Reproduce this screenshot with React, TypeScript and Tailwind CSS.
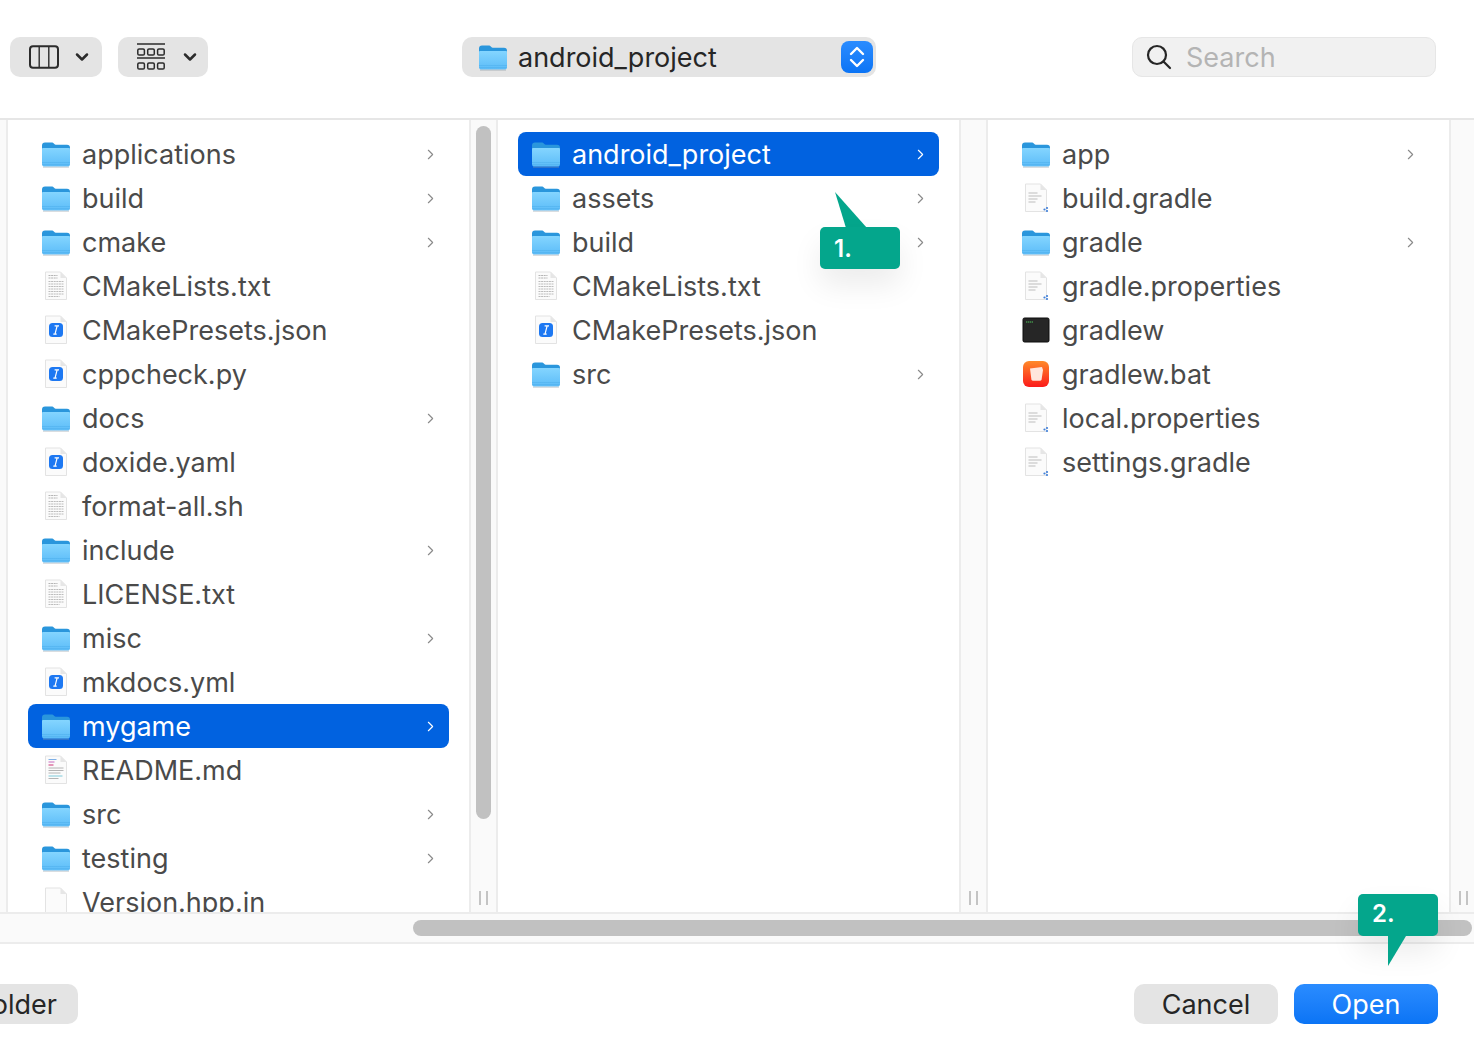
import { ChevronDown, ChevronRight } from "lucide-react";

type Kind = "folder" | "text" | "script" | "gradle" | "terminal" | "bat" | "blank" | "readme";

type Entry = { name: string; kind: Kind; selected?: boolean };

const column1: Entry[] = [
  { name: "applications", kind: "folder" },
  { name: "build", kind: "folder" },
  { name: "cmake", kind: "folder" },
  { name: "CMakeLists.txt", kind: "text" },
  { name: "CMakePresets.json", kind: "script" },
  { name: "cppcheck.py", kind: "script" },
  { name: "docs", kind: "folder" },
  { name: "doxide.yaml", kind: "script" },
  { name: "format-all.sh", kind: "text" },
  { name: "include", kind: "folder" },
  { name: "LICENSE.txt", kind: "text" },
  { name: "misc", kind: "folder" },
  { name: "mkdocs.yml", kind: "script" },
  { name: "mygame", kind: "folder", selected: true },
  { name: "README.md", kind: "readme" },
  { name: "src", kind: "folder" },
  { name: "testing", kind: "folder" },
  { name: "Version.hpp.in", kind: "blank" },
];

const column2: Entry[] = [
  { name: "android_project", kind: "folder", selected: true },
  { name: "assets", kind: "folder" },
  { name: "build", kind: "folder" },
  { name: "CMakeLists.txt", kind: "text" },
  { name: "CMakePresets.json", kind: "script" },
  { name: "src", kind: "folder" },
];

const column3: Entry[] = [
  { name: "app", kind: "folder" },
  { name: "build.gradle", kind: "gradle" },
  { name: "gradle", kind: "folder" },
  { name: "gradle.properties", kind: "gradle" },
  { name: "gradlew", kind: "terminal" },
  { name: "gradlew.bat", kind: "bat" },
  { name: "local.properties", kind: "gradle" },
  { name: "settings.gradle", kind: "gradle" },
];

function FolderIcon() {
  return (
    <svg width="30" height="28" viewBox="0 0 30 28" className="shrink-0">
      <defs>
        <linearGradient id="folderFront" x1="0" y1="0" x2="0" y2="1">
          <stop offset="0" stopColor="#84d5ff" />
          <stop offset="1" stopColor="#5cbcf8" />
        </linearGradient>
      </defs>
      <path d="M1 5.5C1 3.5 2 2.5 4 2.5h6.5c1.2 0 1.8.4 2.6 1.2.7.7 1.2 1 2.2 1H26c2 0 3 1 3 3v4H1z" fill="#2a96dc" />
      <path d="M1 9.2c0-.7.5-1.2 1.2-1.2h25.6c.7 0 1.2.5 1.2 1.2V24c0 1.7-1 2.6-2.6 2.6H3.6C2 26.6 1 25.7 1 24z" fill="url(#folderFront)" />
      <path d="M1 22.5h28M1 24.6h28" stroke="#45a9e8" strokeWidth="0.7" opacity="0.55" />
      <path d="M2 27.2h26" stroke="#8f9aa3" strokeWidth="0.8" opacity="0.6" />
    </svg>
  );
}

function DocShape({ children }: { children?: React.ReactNode }) {
  return (
    <svg width="30" height="30" viewBox="0 0 30 30" className="shrink-0">
      <path d="M4.5 1h15l6 6v21.5H4.5z" fill="#fbfbfb" stroke="#e3e3e3" strokeWidth="1" />
      <path d="M19.5 1v6h6z" fill="#e6e6e6" />
      {children}
    </svg>
  );
}

function FileIcon({ kind }: { kind: Kind }) {
  if (kind === "folder") return <FolderIcon />;
  if (kind === "blank") return <DocShape />;
  if (kind === "text") {
    return (
      <DocShape>
        <path d="M7.5 4.5h9M7.5 7h9" stroke="#b4b4b4" strokeWidth="1" strokeDasharray="2 0.6" />
        <path d="M7.5 10.5h15M7.5 13h15M7.5 15.5h15M7.5 18h15M7.5 20.5h15M7.5 23h15M7.5 25.5h11" stroke="#bcbcbc" strokeWidth="1" strokeDasharray="2 0.6" />
      </DocShape>
    );
  }
  if (kind === "readme") {
    return (
      <DocShape>
        <path d="M7.5 4.5h8" stroke="#7fb0e6" strokeWidth="1" />
        <path d="M7.5 7h6" stroke="#c86ac0" strokeWidth="1" />
        <path d="M7.5 10h5" stroke="#d8548c" strokeWidth="1.2" />
        <path d="M7.5 13h15M7.5 15.5h15M7.5 18h12" stroke="#b4b4b4" strokeWidth="1" />
        <path d="M7.5 21h14" stroke="#7fc9d8" strokeWidth="1" />
        <path d="M7.5 23.5h10" stroke="#b4b4b4" strokeWidth="1" />
      </DocShape>
    );
  }
  if (kind === "gradle") {
    return (
      <DocShape>
        <path d="M7.5 10h9M7.5 13h13M7.5 16h9M7.5 19h7" stroke="#bdbdbd" strokeWidth="1.2" />
        <circle cx="23.5" cy="26.5" r="1.1" fill="#3f7fd8" />
        <circle cx="26" cy="25" r="1.1" fill="#3f7fd8" />
        <circle cx="26" cy="28" r="1.1" fill="#3f7fd8" />
      </DocShape>
    );
  }
  if (kind === "script") {
    return (
      <svg width="30" height="30" viewBox="0 0 30 30" className="shrink-0">
        <path d="M4.5 1h15l6 6v21.5H4.5z" fill="#fbfbfb" stroke="#e3e3e3" strokeWidth="1" />
        <path d="M19.5 1v6h6z" fill="#e6e6e6" />
        <rect x="8" y="8" width="14" height="14" rx="3.5" fill="#1d78f2" />
        <path d="M16.2 10.6l-2.2 8.6M13.6 10.8h4.4M12.3 19.2h3.4" stroke="#fff" strokeWidth="1.2" />
      </svg>
    );
  }
  if (kind === "terminal") {
    return (
      <svg width="30" height="30" viewBox="0 0 30 30" className="shrink-0">
        <rect x="2" y="3" width="26" height="24" rx="1.5" fill="#262626" stroke="#0c0c0c" strokeWidth="1" />
        <path d="M5 7h7" stroke="#4fc45a" strokeWidth="1.2" strokeDasharray="1.4 0.6" />
      </svg>
    );
  }
  return (
    <svg width="30" height="30" viewBox="0 0 30 30" className="shrink-0">
      <defs>
        <linearGradient id="batBg" x1="0" y1="0" x2="0" y2="1">
          <stop offset="0" stopColor="#ff8a2a" />
          <stop offset="1" stopColor="#fb1a1a" />
        </linearGradient>
      </defs>
      <rect x="2" y="2" width="26" height="26" rx="6" fill="url(#batBg)" />
      <path d="M9 9.5l12-1.5 1 3-1.4 9.6c-.1.7-.6 1.2-1.4 1.2h-7.4c-.8 0-1.3-.5-1.4-1.2z" fill="#ffe6dc" />
    </svg>
  );
}

function Row({ entry }: { entry: Entry }) {
  const { name, kind, selected } = entry;
  return (
    <div
      className={`flex h-11 shrink-0 items-center rounded-lg pl-[13px] pr-[10px] ${selected ? "bg-[#0162e0] text-white" : "text-[#4a4a4a]"}`}
    >
      <FileIcon kind={kind} />
      <span className="ml-[11px] flex-1 whitespace-nowrap text-[27px] leading-none">{name}</span>
      {kind === "folder" && (
        <ChevronRight size={17} strokeWidth={1.6} className={selected ? "text-white" : "text-[#8a8a8a]"} />
      )}
    </div>
  );
}

function Column({ entries, thumb }: { entries: Entry[]; thumb?: boolean }) {
  return (
    <div className="flex min-h-0">
      <div className="flex h-full w-[461px] flex-col overflow-hidden bg-white px-5 pt-3">
        {entries.map((entry) => (
          <Row key={entry.name} entry={entry} />
        ))}
      </div>
      <div className="relative h-full w-[29px] border-x-2 border-[#ececec] bg-[#fafafa]">
        {thumb && <div className="mx-auto mt-[6px] h-[693px] w-[15px] rounded-full bg-[#c1c1c1]" />}
        <div className="absolute bottom-[7px] left-[8px] flex gap-[5px]">
          <div className="h-[14px] w-[2px] bg-[#c4c4c4]" />
          <div className="h-[14px] w-[2px] bg-[#c4c4c4]" />
        </div>
      </div>
    </div>
  );
}

function ColumnsIcon() {
  return (
    <svg width="30" height="24" viewBox="0 0 30 24" fill="none" stroke="#2b2b2b">
      <rect x="1" y="1.2" width="28" height="21.6" rx="3" strokeWidth="2" />
      <path d="M10.2 2v20M19.8 2v20" strokeWidth="1.4" />
    </svg>
  );
}

function GalleryIcon() {
  return (
    <svg width="28" height="28" viewBox="0 0 28 28" fill="none" stroke="#2b2b2b">
      <path d="M0 1h28M0 15h28" strokeWidth="1.6" />
      <rect x="0.8" y="6" width="6.6" height="6" rx="1.3" strokeWidth="1.5" />
      <rect x="10.7" y="6" width="6.6" height="6" rx="1.3" strokeWidth="1.5" />
      <rect x="20.6" y="6" width="6.6" height="6" rx="1.3" strokeWidth="1.5" />
      <rect x="0.8" y="20" width="6.6" height="6" rx="1.3" strokeWidth="1.5" />
      <rect x="10.7" y="20" width="6.6" height="6" rx="1.3" strokeWidth="1.5" />
      <rect x="20.6" y="20" width="6.6" height="6" rx="1.3" strokeWidth="1.5" />
    </svg>
  );
}

function Toolbar() {
  return (
    <div className="flex h-[120px] shrink-0 items-center border-b-2 border-[#e6e6e6] bg-white pb-[4px] pl-[10px]">
      <div className="flex h-10 w-[92px] items-center rounded-[10px] bg-[#e4e4e4] pl-[19px]">
        <ColumnsIcon />
        <ChevronDown size={20} strokeWidth={3} className="ml-[13px] text-[#2b2b2b]" />
      </div>
      <div className="ml-4 flex h-10 w-[90px] items-center rounded-[10px] bg-[#e4e4e4] pl-[19px]">
        <GalleryIcon />
        <ChevronDown size={20} strokeWidth={3} className="ml-[15px] text-[#2b2b2b]" />
      </div>
      <div className="ml-[254px] flex h-10 w-[414px] items-center rounded-[10px] bg-[#e4e4e4] pl-[16px] pr-[3px]">
        <FolderIcon />
        <span className="ml-[10px] flex-1 text-[27px] leading-none text-[#262626]">android_project</span>
        <div className="flex h-8 w-8 items-center justify-center rounded-lg bg-gradient-to-b from-[#2a8cff] to-[#0a74f5]">
          <svg width="18" height="26" viewBox="0 0 18 26" fill="none" stroke="#fff" strokeWidth="2.4" strokeLinecap="round" strokeLinejoin="round">
            <path d="M3 10l6-6 6 6M3 16l6 6 6-6" />
          </svg>
        </div>
      </div>
      <div className="ml-[256px] flex h-10 w-[304px] items-center rounded-[10px] border border-[#e6e6e6] bg-[#f1f1f1] pl-[13px]">
        <svg width="26" height="26" viewBox="0 0 26 26" fill="none" stroke="#262626" strokeWidth="2.2" strokeLinecap="round">
          <circle cx="11" cy="11" r="9" />
          <path d="M17.5 17.5l6.5 6.5" />
        </svg>
        <span className="ml-[14px] text-[27px] leading-none text-[#b4b4b4]">Search</span>
      </div>
    </div>
  );
}

function Callout1() {
  return (
    <div className="absolute left-[820px] top-[192px] h-[77px] w-[80px]">
      <svg width="80" height="36" viewBox="0 0 80 36" className="absolute left-0 top-0">
        <path d="M15 0L47 36H26z" fill="#04a68c" />
      </svg>
      <div className="absolute bottom-0 left-0 flex h-[42px] w-[80px] items-center rounded-[5px] bg-[#04a68c] pl-[14px] pt-[2px] text-[24px] font-semibold leading-none text-white shadow-[0_16px_30px_rgba(0,0,0,0.08)]">
        1.
      </div>
    </div>
  );
}

function Callout2() {
  return (
    <div className="absolute left-[1358px] top-[894px] h-[72px] w-[80px]">
      <div className="absolute left-0 top-0 flex h-[42px] w-[80px] items-center rounded-[5px] bg-[#04a68c] pl-[14px] pb-[2px] text-[24px] font-semibold leading-none text-white shadow-[0_16px_30px_rgba(0,0,0,0.08)]">
        2.
      </div>
      <svg width="80" height="30" viewBox="0 0 80 30" className="absolute left-0 top-[42px]">
        <path d="M30 0h18L30 30z" fill="#04a68c" />
      </svg>
    </div>
  );
}

export default function App() {
  return (
    <div className="relative flex h-[1062px] w-[1474px] flex-col overflow-hidden bg-white font-['Inter','Liberation_Sans',sans-serif]">
      <Toolbar />

      <div className="flex h-[792px] shrink-0 overflow-hidden">
        <div className="h-full w-2 shrink-0 border-r-2 border-[#ececec] bg-[#fafafa]" />
        <Column entries={column1} thumb />
        <Column entries={column2} />
        <Column entries={column3} />
      </div>

      <div className="flex h-[32px] shrink-0 items-center border-y-2 border-[#ececec] bg-[#fafafa] pl-[413px] pr-[2px]">
        <div className="h-4 flex-1 rounded-full bg-[#c1c1c1]" />
      </div>

      <div className="flex flex-1 items-start justify-between pr-9 pt-[40px]">
        <div className="flex h-10 w-[78px] items-center justify-end overflow-hidden whitespace-nowrap rounded-r-[10px] bg-[#e4e4e4] pr-[21px] text-[27px] leading-none text-[#262626]">
          New Folder
        </div>
        <div className="flex gap-4">
          <div className="flex h-10 w-36 items-center justify-center rounded-[10px] bg-[#e4e4e4] text-[27px] leading-none text-[#262626]">
            Cancel
          </div>
          <div className="flex h-10 w-36 items-center justify-center rounded-[10px] bg-gradient-to-b from-[#2a8cff] to-[#0a74f5] text-[27px] leading-none text-white">
            Open
          </div>
        </div>
      </div>

      <Callout1 />
      <Callout2 />
    </div>
  );
}
